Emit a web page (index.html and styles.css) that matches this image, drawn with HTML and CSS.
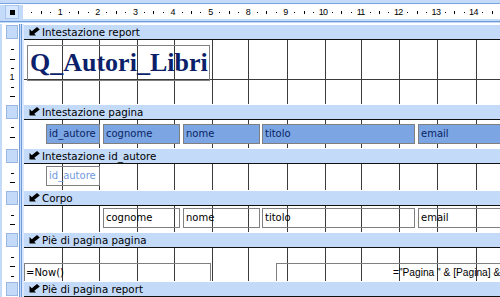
FILE: index.html
```html
<!DOCTYPE html>
<html lang="it">
<head>
<meta charset="utf-8">
<title>Q_Autori_Libri</title>
<link rel="stylesheet" href="styles.css">
</head>
<body>
<div class="designer">
  <div class="top">
    <div class="corner"><span class="corner-sq"></span></div>
    <div class="hruler">
      <div class="cm"><span class="d"></span><span class="t"></span><span class="d"></span><span class="n">1</span></div>
      <div class="cm"><span class="d"></span><span class="t"></span><span class="d"></span><span class="n">2</span></div>
      <div class="cm"><span class="d"></span><span class="t"></span><span class="d"></span><span class="n">3</span></div>
      <div class="cm"><span class="d"></span><span class="t"></span><span class="d"></span><span class="n">4</span></div>
      <div class="cm"><span class="d"></span><span class="t"></span><span class="d"></span><span class="n">5</span></div>
      <div class="cm"><span class="d"></span><span class="t"></span><span class="d"></span><span class="n">8</span></div>
      <div class="cm"><span class="d"></span><span class="t"></span><span class="d"></span><span class="n">9</span></div>
      <div class="cm"><span class="d"></span><span class="t"></span><span class="d"></span><span class="n">10</span></div>
      <div class="cm"><span class="d"></span><span class="t"></span><span class="d"></span><span class="n">11</span></div>
      <div class="cm"><span class="d"></span><span class="t"></span><span class="d"></span><span class="n">12</span></div>
      <div class="cm"><span class="d"></span><span class="t"></span><span class="d"></span><span class="n">13</span></div>
      <div class="cm"><span class="d"></span><span class="t"></span><span class="d"></span><span class="n">14</span></div>
      <div class="cm"><span class="d"></span><span class="t"></span><span class="d"></span><span class="n"></span></div>
    </div>
  </div>

  <div class="sections">
    <!-- Intestazione report -->
    <div class="sel"><i></i></div>
    <div class="bar"><svg class="ico" viewBox="0 0 11 9"><polygon points="0.5,8.5 0.5,2 2.8,4.2 8,0 10.8,2.6 5.3,6.8 7,8.5"/></svg><span>Intestazione report</span></div>
    <div class="vr p1"><span class="s"></span><span class="l"></span><span class="s"></span><span class="n">1</span><span class="s"></span><span class="l"></span></div>
    <div class="area">
      <div class="band"><div class="title">Q_Autori_Libri</div></div>
    </div>

    <!-- Intestazione pagina -->
    <div class="sel"><i></i></div>
    <div class="bar"><svg class="ico" viewBox="0 0 11 9"><polygon points="0.5,8.5 0.5,2 2.8,4.2 8,0 10.8,2.6 5.3,6.8 7,8.5"/></svg><span>Intestazione pagina</span></div>
    <div class="vr p2"><span class="s"></span><span class="l"></span></div>
    <div class="area">
      <div class="row r-top4">
        <div class="lbl w54">id_autore</div>
        <div class="lbl w77">cognome</div>
        <div class="lbl w77">nome</div>
        <div class="lbl w153 tight">titolo</div>
        <div class="lbl w120">email</div>
      </div>
    </div>

    <!-- Intestazione id_autore -->
    <div class="sel"><i></i></div>
    <div class="bar"><svg class="ico" viewBox="0 0 11 9"><polygon points="0.5,8.5 0.5,2 2.8,4.2 8,0 10.8,2.6 5.3,6.8 7,8.5"/></svg><span>Intestazione id_autore</span></div>
    <div class="vr p3"><span class="s"></span><span class="l"></span></div>
    <div class="area">
      <div class="row r-top2">
        <div class="tb w54 faint">id_autore</div>
      </div>
    </div>

    <!-- Corpo -->
    <div class="sel"><i></i></div>
    <div class="bar"><svg class="ico" viewBox="0 0 11 9"><polygon points="0.5,8.5 0.5,2 2.8,4.2 8,0 10.8,2.6 5.3,6.8 7,8.5"/></svg><span>Corpo</span></div>
    <div class="vr p3"><span class="s"></span><span class="l"></span></div>
    <div class="area">
      <div class="row r-top2 r-body">
        <div class="tb w77">cognome</div>
        <div class="tb w77">nome</div>
        <div class="tb w153 tight">titolo</div>
        <div class="tb w120">email</div>
      </div>
    </div>

    <!-- Piè di pagina pagina -->
    <div class="sel"><i></i></div>
    <div class="bar"><svg class="ico" viewBox="0 0 11 9"><polygon points="0.5,8.5 0.5,2 2.8,4.2 8,0 10.8,2.6 5.3,6.8 7,8.5"/></svg><span>Piè di pagina pagina</span></div>
    <div class="vr p3"><span class="s"></span><span class="l"></span><span class="s"></span></div>
    <div class="area">
      <div class="row r-foot">
        <div class="tb fnow">=Now()</div>
        <div class="tb fpage">="Pagina " &amp; [Pagina] &amp;</div>
      </div>
    </div>

    <!-- Piè di pagina report -->
    <div class="sel"><i></i></div>
    <div class="bar"><svg class="ico" viewBox="0 0 11 9"><polygon points="0.5,8.5 0.5,2 2.8,4.2 8,0 10.8,2.6 5.3,6.8 7,8.5"/></svg><span>Piè di pagina report</span></div>
  </div>
</div>
</body>
</html>
```

FILE: styles.css
```css
* { margin: 0; padding: 0; box-sizing: border-box; }

html, body { width: 500px; height: 297px; overflow: hidden; }

body {
  background: #c3daf9;
  font-family: "DejaVu Sans", "Liberation Sans", sans-serif;
  font-size: 10px;
  color: #000;
}

.designer {
  display: flex;
  flex-direction: column;
  width: 500px;
  height: 297px;
  overflow: hidden;
}

/* ---------- top ruler row ---------- */
.top {
  flex: none;
  height: 24px;
  display: flex;
  align-items: flex-start;
  padding: 5px 0 0 5px;
  background: linear-gradient(to bottom,
    #c3daf9 0 3px, #7ba3e0 3px 4px, #ffffff 4px 5px,
    #c3daf9 5px 21px, #6f9bdb 21px 22px, #c3daf9 22px 23px, #ffffff 23px 24px);
}

.corner {
  flex: none;
  width: 14px;
  height: 14px;
  background: #d6e6fc;
  border: 1px solid #a9c4ec;
  display: flex;
  align-items: center;
  justify-content: center;
}

.corner-sq { width: 5px; height: 5px; background: #000; }

.hruler {
  flex: 1;
  height: 14px;
  margin-left: 4px;
  background: #fff;
  display: flex;
  padding-left: 4.1px;
  overflow: hidden;
}

.cm { flex: none; width: 37.6px; display: flex; }

.cm > span {
  flex: none;
  width: 9.4px;
  height: 14px;
  display: flex;
  align-items: center;
  justify-content: center;
}

.cm .d::before { content: ""; width: 1px; height: 1px; background: #000; }
.cm .t::before { content: ""; width: 1px; height: 3px; background: #000; }

.cm .n {
  font-family: "Liberation Sans", sans-serif;
  font-size: 9px;
  line-height: 14px;
  letter-spacing: -0.6px;
  white-space: nowrap;
}

/* ---------- sections ---------- */
.sections {
  flex: 1;
  display: grid;
  grid-template-columns: 24px 476px;
  grid-template-rows: 16px 64px 16px 28px 16px 26px 16px 26px 16px 33px 16px;
  background: linear-gradient(to right,
    #c3daf9 0 2px, #ffffff 2px 19px, #6f9bdb 19px 20px,
    #c3daf9 20px 21px, #6f9bdb 21px 22px, #dbe8fb 22px 24px);
}

.sel { padding: 1px 0 1px 6px; }
.sel i {
  display: block;
  width: 12px;
  height: 14px;
  background: #c3daf9;
  border: 1px solid #9ab7e4;
}

.bar {
  display: flex;
  align-items: center;
  gap: 2px;
  padding-left: 5px;
  background: linear-gradient(#ffffff 0 1px, #c3daf9 1px);
  border-bottom: 1px solid #111;
  white-space: nowrap;
  overflow: hidden;
  font-size: 10.3px;
}

.ico { flex: none; width: 11px; height: 9px; fill: #000; }

/* vertical ruler */
.vr {
  display: flex;
  flex-direction: column;
  align-items: center;
  overflow: hidden;
}
.vr.p1 { padding-top: 5.3px; }
.vr.p2 { padding-top: 3.3px; }
.vr.p3 { padding-top: 4.6px; }

.vr > span {
  flex: none;
  width: 100%;
  height: 9.4px;
  display: flex;
  align-items: center;
  justify-content: center;
}
.vr .s::before { content: ""; width: 3px; height: 1px; background: #000; }
.vr .l::before { content: ""; width: 5px; height: 1px; background: #000; }
.vr .n {
  font-family: "Liberation Sans", sans-serif;
  font-size: 9px;
  line-height: 9.4px;
}

/* design surface with grid */
.area {
  --g: linear-gradient(#3b3b3b, #3b3b3b);
  overflow: hidden;
  background-color: #fff;
  background-image: var(--g), var(--g), var(--g), var(--g), var(--g), var(--g),
                    var(--g), var(--g), var(--g), var(--g), var(--g), var(--g);
  background-position: 38px 0, 75px 0, 113px 0, 150px 0, 188px 0, 224px 0,
                       263px 0, 301px 0, 337px 0, 375px 0, 413px 0, 452px 0;
  background-size: 1px 100%;
  background-repeat: no-repeat;
}

.band {
  height: 40px;
  border-bottom: 1px solid #3b3b3b;
  padding: 5px 0 0 3px;
}

.title {
  width: 183px;
  height: 36px;
  border: 1px solid #808080;
  padding-left: 2px;
  font-family: "Liberation Serif", "Times New Roman", serif;
  font-weight: bold;
  font-size: 26px;
  line-height: 33px;
  color: #0c1f6a;
  white-space: nowrap;
}

.row { display: flex; gap: 3px; padding-left: 22px; }
.r-top4 { padding-top: 4px; }
.r-top2 { padding-top: 2px; }
.r-body { padding-left: 79px; }
.r-foot { padding: 15px 0 0 0; gap: 0; }

.lbl, .tb {
  flex: none;
  height: 20px;
  border: 1px solid #7f7f7f;
  padding-left: 2px;
  line-height: 18px;
  white-space: nowrap;
  overflow: hidden;
}

.lbl { background: #7ba6e3; color: #0a2463; }
.tb { background: transparent; color: #000; }
.tb.faint { color: #6f9ade; }

.w54 { width: 54px; }
.w77 { width: 77px; }
.w153 { width: 153px; }
.w120 { width: 120px; }
.tight { margin-left: -1px; }

.fnow { width: 187px; padding-left: 1px; }
.fpage {
  width: 240px;
  margin-left: 65px;
  padding-left: 116px;
  font-family: "Liberation Sans", sans-serif;
  font-size: 10.2px;
}
```
